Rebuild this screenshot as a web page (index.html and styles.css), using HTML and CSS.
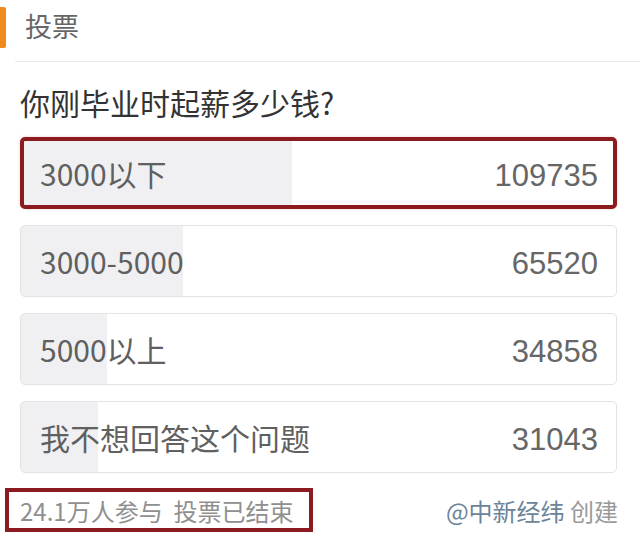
FILE: index.html
```html
<!DOCTYPE html>
<html lang="zh-CN">
<head>
    <meta charset="UTF-8">
    <meta name="viewport" content="width=device-width, initial-scale=1.0">
    <title>投票</title>
    <link rel="stylesheet" href="styles.css">
</head>
<body>
    <div class="poll-card">
        <div class="poll-head">
            <span class="head-mark"></span>
            <span class="head-title">投票</span>
        </div>
        <div class="divider"></div>

        <h2 class="question">你刚毕业时起薪多少钱?</h2>

        <div class="options">
            <div class="option highlighted" style="--pct: 45.5%">
                <span class="option-label">3000以下</span>
                <span class="option-count">109735</span>
            </div>
            <div class="option" style="--pct: 27.2%">
                <span class="option-label">3000-5000</span>
                <span class="option-count">65520</span>
            </div>
            <div class="option" style="--pct: 14.5%">
                <span class="option-label">5000以上</span>
                <span class="option-count">34858</span>
            </div>
            <div class="option" style="--pct: 12.9%">
                <span class="option-label">我不想回答这个问题</span>
                <span class="option-count">31043</span>
            </div>
        </div>

        <div class="poll-foot">
            <span class="poll-stats">24.1万人参与&nbsp;&nbsp;投票已结束</span>
            <span class="poll-author"><span class="author-name">@中新经纬</span> 创建</span>
        </div>
    </div>
</body>
</html>
```

FILE: styles.css
```css
* {
    margin: 0;
    padding: 0;
    box-sizing: border-box;
}

body {
    font-family: "Noto Sans CJK SC", "Noto Sans", sans-serif;
    background: #fff;
    width: 640px;
    height: 534px;
    overflow: hidden;
}

.poll-head {
    display: flex;
    align-items: center;
    height: 61px;
    padding-bottom: 10px;
    padding-top: 4px;
}

.head-mark {
    width: 6px;
    height: 41px;
    background: #f08a1d;
    border-radius: 0 2px 2px 0;
}

.head-title {
    margin-left: 19px;
    margin-bottom: 4px;
    font-size: 27px;
    line-height: 30px;
    color: #666;
}

.divider {
    height: 1px;
    margin-left: 15px;
    background: #f1e9e9;
}

.question {
    font-size: 30px;
    font-weight: 400;
    line-height: 32px;
    color: #333;
    padding: 24px 0 0 20px;
    margin-bottom: 19px;
}

.options {
    display: flex;
    flex-direction: column;
    gap: 16px;
    padding: 0 23px 0 20px;
}

.option {
    display: flex;
    justify-content: space-between;
    align-items: baseline;
    height: 72px;
    padding: 13px 18px 0 19px;
    border: 1px solid #e3e3e3;
    border-radius: 5px;
    background: linear-gradient(to right, #f0f0f2 var(--pct), #fff var(--pct));
    font-size: 30px;
    color: #606060;
}

.option-count {
    font-family: "Liberation Sans", sans-serif;
    font-size: 31px;
    color: #666;
}

.option.highlighted {
    outline: 4px solid #8b1b1f;
    outline-offset: -4px;
    box-shadow: 0 0 3px rgba(240, 150, 150, 0.5);
}

.poll-foot {
    display: flex;
    justify-content: space-between;
    align-items: center;
    padding: 15px 22px 0 5px;
}

.poll-stats {
    display: flex;
    align-items: center;
    height: 44px;
    padding: 0 16px 0 11px;
    border: 4px solid #8b1b1f;
    font-size: 24px;
    color: #8f8f8f;
}

.poll-author {
    font-size: 24px;
    color: #9a9a9a;
}

.author-name {
    color: #6c8499;
}
```
